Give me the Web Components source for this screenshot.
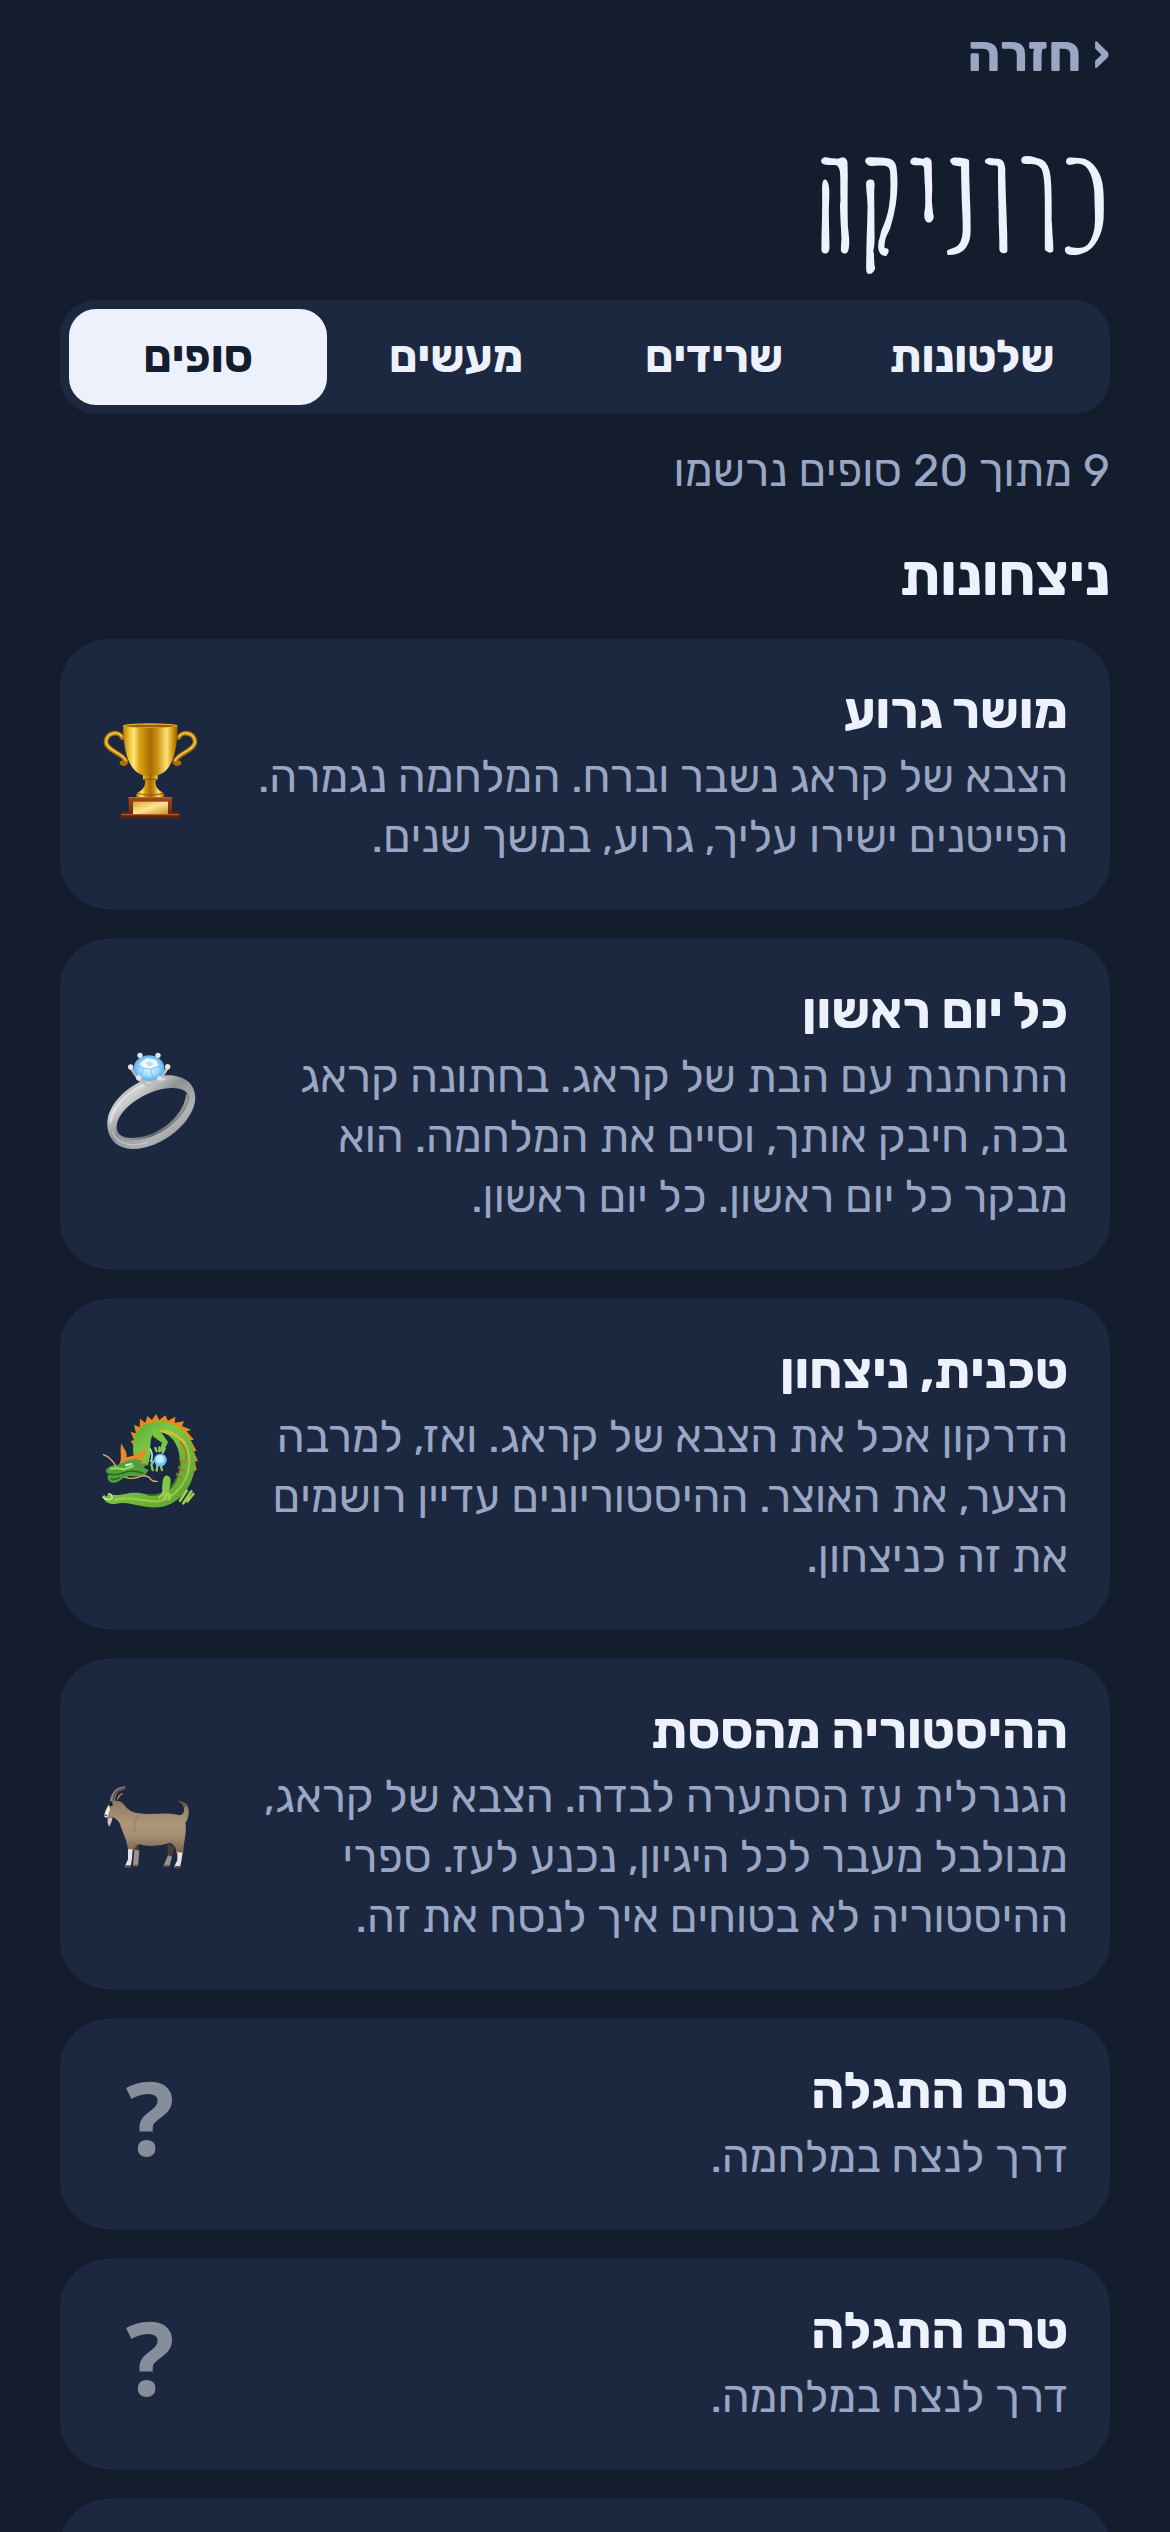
<!DOCTYPE html>
<html lang="he" dir="rtl">
<head>
<meta charset="utf-8">
<meta name="viewport" content="width=device-width, initial-scale=1">
<title>כרוניקה</title>
<style>
  :root {
    --bg: #141d2e;
    --surface: #1c2840;
    --text: #edf1fb;
    --muted: #9aa6c3;
    --font-body: Rubik, "Noto Sans Hebrew", "Open Sans", sans-serif;
    --font-display: "Amatic SC", Rubik, "Open Sans", sans-serif;
  }
  body {
    margin: 0;
    background: var(--bg);
    color: var(--text);
    font-family: var(--font-body);
  }
</style>
</head>
<body>

<chronicle-page>
  <back-link slot="nav" href="#home">‹ חזרה</back-link>
  <span slot="title">כרוניקה</span>

  <tab-bar slot="tabs">
    <tab-item>שלטונות</tab-item>
    <tab-item>שרידים</tab-item>
    <tab-item>מעשים</tab-item>
    <tab-item selected>סופים</tab-item>
  </tab-bar>

  <span slot="count">9 מתוך 20 סופים נרשמו</span>

  <ending-list label="ניצחונות">
    <ending-card icon="trophy">
      <span slot="name">מושר גרוע</span>
      הצבא של קראג נשבר וברח. המלחמה נגמרה. הפייטנים ישירו עליך, גרוע, במשך שנים.
    </ending-card>
    <ending-card icon="ring">
      <span slot="name">כל יום ראשון</span>
      התחתנת עם הבת של קראג. בחתונה קראג בכה, חיבק אותך, וסיים את המלחמה. הוא מבקר כל יום ראשון. כל יום ראשון.
    </ending-card>
    <ending-card icon="dragon">
      <span slot="name">טכנית, ניצחון</span>
      הדרקון אכל את הצבא של קראג. ואז, למרבה הצער, את האוצר. ההיסטוריונים עדיין רושמים את זה כניצחון.
    </ending-card>
    <ending-card icon="goat">
      <span slot="name">ההיסטוריה מהססת</span>
      הגנרלית עז הסתערה לבדה. הצבא של קראג, מבולבל מעבר לכל היגיון, נכנע לעז. ספרי ההיסטוריה לא בטוחים איך לנסח את זה.
    </ending-card>
    <ending-card>
      <span slot="name">טרם התגלה</span>
      דרך לנצח במלחמה.
    </ending-card>
    <ending-card>
      <span slot="name">טרם התגלה</span>
      דרך לנצח במלחמה.
    </ending-card>
    <ending-card>
      <span slot="name">טרם התגלה</span>
      דרך לנצח במלחמה.
    </ending-card>
  </ending-list>
</chronicle-page>

<script>
const ICONS = {
  trophy: `
    <svg viewBox="66 78 288 288" aria-hidden="true">
      <defs>
        <linearGradient id="gold" x1="0" x2="1">
          <stop offset="0" stop-color="#b87d05"/><stop offset=".12" stop-color="#f3c53a"/>
          <stop offset=".2" stop-color="#ffe680"/><stop offset=".3" stop-color="#dca414"/>
          <stop offset=".5" stop-color="#a86c04"/><stop offset=".62" stop-color="#c98d0c"/>
          <stop offset=".8" stop-color="#fbe27a"/><stop offset=".9" stop-color="#d79c13"/>
          <stop offset="1" stop-color="#8f5c03"/>
        </linearGradient>
        <linearGradient id="plate" x1="0" x2="1" y2="1">
          <stop offset="0" stop-color="#d9a636"/><stop offset=".5" stop-color="#ffe596"/><stop offset="1" stop-color="#c98f24"/>
        </linearGradient>
        <linearGradient id="wood" x2="0" y2="1">
          <stop offset="0" stop-color="#a4471a"/><stop offset="1" stop-color="#5c1d08"/>
        </linearGradient>
      </defs>
      <g fill="none" stroke-linecap="round">
        <g stroke="#a9700a" stroke-width="14">
          <path d="M127 113C119 93 79 94 78 126C78 152 134 163 138 184Q138 194 126 189"/>
          <path d="M296 113C304 93 344 94 345 126C345 152 289 163 285 184Q285 194 297 189"/>
        </g>
        <g stroke="#f0c545" stroke-width="6">
          <path d="M125 109C116 93 80 96 78 126C79 150 133 162 137 181"/>
          <path d="M298 109C307 93 343 96 345 126C344 150 290 162 286 181"/>
        </g>
      </g>
      <path fill="url(#gold)" d="M129 77C130 145 143 216 193 227H229C280 216 292 145 293 77Z"/>
      <ellipse cx="211" cy="77" rx="82" ry="7" fill="#e5b52e"/>
      <ellipse cx="211" cy="78" rx="76" ry="4" fill="#966006"/>
      <path fill="url(#gold)" d="M189 226H233V237L226 243C226 258 232 270 250 278Q257 288 249 293H173Q165 288 172 278C190 270 196 258 196 243L189 237Z"/>
      <path d="M190 238H232M172 280Q211 291 250 280" stroke="#8a5703" stroke-width="3" fill="none"/>
      <path fill="url(#wood)" d="M146 292H276V337H292Q300 340 300 355H121Q121 341 130 337H146Z"/>
      <path d="M146 293H276M124 344H298" stroke="#c06830" stroke-width="3"/>
      <rect x="159" y="305" width="105" height="37" fill="url(#plate)"/>
    </svg>`,
  ring: `
    <svg viewBox="66 78 288 288" aria-hidden="true">
      <defs>
        <linearGradient id="silver" x1="0" x2="1" y2="1">
          <stop offset="0" stop-color="#7f8286"/><stop offset=".28" stop-color="#cfd1d2"/>
          <stop offset=".45" stop-color="#8f9295"/><stop offset=".7" stop-color="#b1b4b6"/><stop offset="1" stop-color="#6c7075"/>
        </linearGradient>
        <linearGradient id="inner" x1="0" x2="1">
          <stop offset="0" stop-color="#b5b8ba"/><stop offset=".5" stop-color="#64686d"/><stop offset="1" stop-color="#94979b"/>
        </linearGradient>
        <radialGradient id="gem">
          <stop offset="0" stop-color="#e9fbff"/><stop offset=".6" stop-color="#9fdcff"/><stop offset="1" stop-color="#5aaef0"/>
        </radialGradient>
      </defs>
      <path fill="url(#silver)" fill-rule="evenodd" d="M82 280C82 214 170 136 260 136C312 136 346 160 346 204C344 276 244 357 158 357C110 357 82 326 82 280ZM110 288C106 324 140 332 178 328C250 320 322 252 326 206C327 184 304 172 270 174C200 178 114 236 110 288Z"/>
      <path fill="url(#inner)" d="M110 288C108 322 140 328 178 322C246 312 316 250 318 190Q326 196 326 208C320 256 248 322 176 329C136 332 106 322 110 288Z"/>
      <path d="M92 274C100 218 176 152 254 148" stroke="#f2f3f3" stroke-width="6" fill="none" stroke-linecap="round" opacity=".6"/>
      <path d="M98 306C110 346 160 350 200 338" stroke="#d9dadb" stroke-width="4" fill="none" stroke-linecap="round" opacity=".6"/>
      <path d="M152 112L176 148L206 168L238 150L264 112M176 146Q208 160 240 146" stroke="#b9bbbc" stroke-width="9" fill="none" stroke-linejoin="round"/>
      <ellipse cx="207" cy="114" rx="46" ry="38" fill="url(#gem)"/>
      <path d="M180 100L200 84L228 90L236 108L212 118L190 114Z" fill="#eefcff"/>
      <path d="M166 106L190 114L184 138M190 114L212 118L220 148M212 118L236 108L248 126M180 100L176 90" stroke="#79bff2" stroke-width="3" fill="none"/>
      <path d="M196 100L208 94L222 102L208 110Z" fill="#b4e2ff"/>
      <g fill="#e7e5e2"><circle cx="152" cy="111" r="8"/><circle cx="263" cy="110" r="8"/><circle cx="180" cy="76" r="8"/><circle cx="234" cy="76" r="8"/><circle cx="176" cy="143" r="8"/><circle cx="238" cy="145" r="7"/></g>
    </svg>`,
  dragon: `
    <svg viewBox="66 78 288 288" aria-hidden="true">
      <defs>
        <linearGradient id="scale" x1="0" x2="1" y2="1">
          <stop offset="0" stop-color="#3f9a32"/><stop offset=".4" stop-color="#7cc744"/><stop offset="1" stop-color="#5b9c2c"/>
        </linearGradient>
      </defs>
      <path fill="#e88a1c" d="M164 172L152 154L162 150L152 126L168 130L162 104L179 112L180 86L196 98L202 78L216 90L228 72L238 90L256 76L264 92L286 80L284 98L312 94L306 108L334 120L320 124L342 150L332 150L350 184L340 182L354 214L344 214L350 240L336 246L334 180L290 116L240 104L190 120L172 172Z"/>
      <path fill="url(#scale)" d="M160 190C156 130 178 96 236 95C308 95 346 150 346 216C344 292 292 350 232 352C182 354 150 334 118 340C92 346 74 338 68 320Q72 312 80 320Q84 306 98 314C130 320 150 298 204 314C258 326 298 286 300 224C302 168 276 132 240 126C214 124 208 150 212 190L204 226L168 226Z"/>
      <path d="M244 122C292 124 330 160 328 218C326 286 268 338 220 334C170 330 150 320 104 330" stroke="#c8d658" stroke-width="6" fill="none" opacity=".6"/>
      <path d="M302 216C298 288 250 320 204 315" stroke="#397a25" stroke-width="5" fill="none"/>
      <path d="M300 156Q324 176 318 214M316 220L298 206M314 244L294 230M306 264L288 250" stroke="#b77322" stroke-width="5" fill="none"/>
      <path d="M240 124Q288 128 318 160" stroke="#f0b52b" stroke-width="5" fill="none"/>
      <path d="M214 116Q240 120 250 136L264 156L250 186L238 184L246 158L220 140Z" fill="#77c545"/>
      <path d="M230 184L226 174M238 184V172M248 188L254 176M220 214L214 224L218 240M232 226L230 242M242 226L246 240" stroke="#87c96a" stroke-width="7" fill="none" stroke-linecap="round"/>
      <path d="M248 320C246 296 244 262 258 256Q274 258 272 276L266 312L276 326" fill="#84c648"/>
      <path d="M238 322L252 308M250 328L262 312M268 328V312M300 332L320 302M310 340L334 304M322 334L340 312" stroke="#9ad04e" stroke-width="8" stroke-linecap="round"/>
      <path fill="#e78a25" d="M118 222C128 206 118 184 124 160C132 178 142 184 140 202C160 196 184 192 196 170C202 196 186 204 162 216L200 208Q190 226 154 232Z"/>
      <path fill="#4fa03a" d="M78 240Q86 226 110 226L136 214L166 206L188 212L180 220L204 222L190 232L206 240L196 254Q174 262 148 258Q130 262 116 274Q98 284 86 272Q78 258 88 252Q78 252 78 240Z"/>
      <path d="M84 252Q110 258 132 248T190 250M92 266Q104 272 120 262" stroke="#296827" stroke-width="5" fill="none"/>
      <path d="M90 236Q112 232 130 238L162 228" stroke="#a7d85a" stroke-width="6" fill="none"/>
      <path d="M138 226L154 222" stroke="#c5f2ff" stroke-width="6" stroke-linecap="round"/>
      <path d="M108 230Q94 202 70 194M136 262C170 276 182 246 208 262Q216 276 232 274" stroke="#dfae70" stroke-width="4" fill="none" stroke-linecap="round"/>
      <circle cx="241" cy="210" r="19" fill="#6cc5f4"/>
      <circle cx="240" cy="208" r="12" fill="#bdeeff"/>
      <path d="M210 176Q222 196 212 216" stroke="#b8e2ee" stroke-width="5" fill="none"/>
      <path d="M68 320Q78 334 96 326Q98 310 84 312" stroke="#d9e6a5" stroke-width="4" fill="none"/>
    </svg>`,
  goat: `
    <svg viewBox="66 48 288 288" aria-hidden="true">
      <defs>
        <linearGradient id="coat" x2="0" y2="1">
          <stop offset="0" stop-color="#8e7a66"/><stop offset=".45" stop-color="#ae9679"/><stop offset=".7" stop-color="#a38b70"/><stop offset="1" stop-color="#75604c"/>
        </linearGradient>
      </defs>
      <path d="M162 236L178 246L176 272L174 318H160L163 284Z" fill="#4c3b33"/>
      <path d="M262 248L284 262L276 286L270 318H252L264 288Z" fill="#4c3b33"/>
      <path d="M163 268L178 272L174 318H159ZM264 286L276 290L268 319H250Z" fill="#98918c"/>
      <path fill="url(#coat)" d="M76 152C84 132 92 124 108 122Q124 122 132 134Q146 156 178 160C216 166 258 154 300 166Q314 162 312 144Q310 130 294 124Q320 124 326 148Q328 172 316 190C322 220 310 244 310 280H288Q290 256 270 248Q220 266 174 252L158 272H144C142 240 128 220 120 192Q112 176 96 170L82 174Q72 170 76 152Z"/>
      <path d="M178 166Q160 176 164 214" stroke="#8d765f" stroke-width="4" fill="none" opacity=".6"/>
      <path d="M298 125Q312 128 316 142" stroke="#604d42" stroke-width="4" fill="none"/>
      <path d="M144 268L158 268L156 296L152 320H134L144 298ZM292 276L308 278L304 304L300 322H282L292 300Z" fill="#e6e2df"/>
      <path d="M136 316H153V323H133ZM285 318H301V325H282ZM160 314H174L173 320H158ZM252 315H268V321H249Z" fill="#5d514c"/>
      <path d="M89 124C94 98 108 80 136 79Q137 87 128 90C112 92 106 106 105 124Z" fill="#8b817c"/>
      <path d="M99 122C102 100 114 88 132 84" stroke="#544a48" stroke-width="4" fill="none"/>
      <path d="M108 118Q112 98 132 96Q132 112 114 124Z" fill="#322822"/>
      <path d="M112 118Q118 104 128 100" stroke="#a18974" stroke-width="4" fill="none"/>
      <path d="M86 136L90 148L82 172Q72 174 72 164Z" fill="#f1ede9"/>
      <path d="M84 174L98 172Q96 186 88 200Q80 190 84 174Z" fill="#c9c0b8"/>
      <ellipse cx="93" cy="133" rx="5" ry="6" fill="#19120e"/>
      <path d="M73 164L81 168" stroke="#443732" stroke-width="4"/>
    </svg>`
};

class ChroniclePage extends HTMLElement {
  constructor() {
    super();
    this.attachShadow({ mode: 'open' });
    this.shadowRoot.innerHTML = `
      <style>
        :host {
          display: block;
          box-sizing: border-box;
          height: 100vh;
          padding: 21px 60px 60px;
          overflow-y: auto;
          scrollbar-width: none;
        }
        h1 {
          margin: 36px 0 27px;
          font: 700 144px/150px var(--font-display);
        }
        p {
          margin: 27px 0 39px;
          color: var(--muted);
          font-size: 45px;
          line-height: 60px;
        }
      </style>
      <nav><slot name="nav"></slot></nav>
      <main>
        <h1><slot name="title"></slot></h1>
        <slot name="tabs"></slot>
        <p><slot name="count"></slot></p>
        <slot></slot>
      </main>
    `;
  }
}
customElements.define('chronicle-page', ChroniclePage);

class BackLink extends HTMLElement {
  constructor() {
    super();
    this.attachShadow({ mode: 'open' });
    this.shadowRoot.innerHTML = `
      <style>
        :host {
          display: block;
        }
        a {
          display: inline-block;
          color: var(--muted);
          font-size: 51px;
          font-weight: 700;
          line-height: 66px;
          text-decoration: none;
          vertical-align: top;
        }
      </style>
      <a href="${this.getAttribute('href')}"><slot></slot></a>
    `;
  }
}
customElements.define('back-link', BackLink);

class TabBar extends HTMLElement {
  constructor() {
    super();
    this.attachShadow({ mode: 'open' });
    this.shadowRoot.innerHTML = `
      <style>
        :host {
          display: grid;
          grid-auto-flow: column;
          grid-auto-columns: 1fr;
          padding: 9px;
          border-radius: 36px;
          background: var(--surface);
        }
      </style>
      <slot></slot>
    `;
  }
}
customElements.define('tab-bar', TabBar);

class TabItem extends HTMLElement {
  constructor() {
    super();
    this.attachShadow({ mode: 'open' });
    this.shadowRoot.innerHTML = `
      <style>
        :host {
          display: block;
        }
        button {
          width: 100%;
          padding: 18px 0;
          border: 0;
          border-radius: 27px;
          background: none;
          color: var(--text);
          font: 700 45px/60px var(--font-body);
        }
        :host([selected]) button {
          background: var(--text);
          color: var(--bg);
        }
      </style>
      <button type="button" aria-pressed="${this.hasAttribute('selected')}"><slot></slot></button>
    `;
  }
}
customElements.define('tab-item', TabItem);

class EndingList extends HTMLElement {
  constructor() {
    super();
    this.attachShadow({ mode: 'open' });
    this.shadowRoot.innerHTML = `
      <style>
        :host {
          display: block;
        }
        h2 {
          margin: 0 0 27px;
          font-size: 57px;
          font-weight: 700;
          line-height: 72px;
        }
        .cards {
          display: flex;
          flex-direction: column;
          gap: 30px;
        }
      </style>
      <section>
        <h2>${this.getAttribute('label')}</h2>
        <div class="cards"><slot></slot></div>
      </section>
    `;
  }
}
customElements.define('ending-list', EndingList);

class EndingCard extends HTMLElement {
  constructor() {
    super();
    this.attachShadow({ mode: 'open' });
    this.shadowRoot.innerHTML = `
      <style>
        :host {
          display: flex;
          align-items: center;
          gap: 42px;
          padding: 42px;
          border-radius: 48px;
          background: var(--surface);
        }
        .text {
          flex: 1;
          min-width: 0;
        }
        h3 {
          margin: 0 0 6px;
          font-size: 51px;
          font-weight: 700;
          line-height: 60px;
        }
        p {
          margin: 0;
          color: var(--muted);
          font-size: 45px;
          line-height: 60px;
        }
        .icon {
          flex: none;
          width: 96px;
          text-align: center;
        }
        svg {
          display: block;
          width: 96px;
          height: 96px;
          overflow: visible;
        }
        .unknown {
          padding-bottom: 15px;
          color: #868d9b;
          font: 700 102px/102px "Open Sans", sans-serif;
        }
      </style>
      <div class="text">
        <h3><slot name="name"></slot></h3>
        <p><slot></slot></p>
      </div>
      ${this.icon}
    `;
  }

  get icon() {
    const svg = ICONS[this.getAttribute('icon')];
    return svg ? `<div class="icon">${svg}</div>` : '<div class="icon unknown">?</div>';
  }
}
customElements.define('ending-card', EndingCard);
</script>
</body>
</html>
